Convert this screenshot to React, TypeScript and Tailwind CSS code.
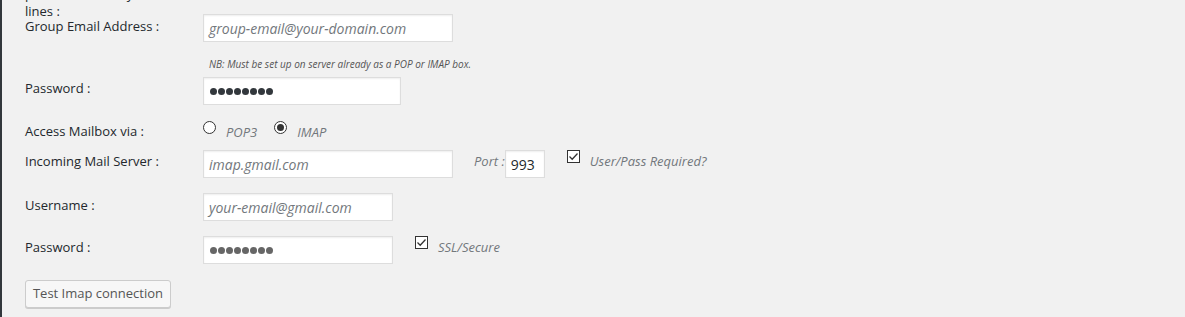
import type { ReactNode } from "react";

const font = { fontFamily: '"Open Sans", "Noto Sans", sans-serif' };

function Label({ children, pt = "pt-[3px]" }: { children: ReactNode; pt?: string }) {
  return <div className={`w-[178px] shrink-0 text-[13px] leading-[18px] text-[#23282d] ${pt}`}>{children}</div>;
}

function TextBox({ value, width, italic = true, dark = false }: { value: string; width: string; italic?: boolean; dark?: boolean }) {
  return (
    <div
      className={`flex h-[28px] items-center border border-[#ddd] bg-white px-[5px] shadow-[inset_0_1px_2px_rgba(0,0,0,0.07)] ${width} ${
        italic ? "italic" : ""
      } ${dark ? "text-[#23282d]" : "text-[#72777c]"} text-[14px]`}
    >
      {value}
    </div>
  );
}

function Dots({ width, color }: { width: string; color: string }) {
  return (
    <div className={`flex h-[28px] items-center gap-[1px] border border-[#ddd] bg-white px-[6px] shadow-[inset_0_1px_2px_rgba(0,0,0,0.07)] ${width}`}>
      {Array.from({ length: 8 }).map((_, i) => (
        <span key={i} className={`size-[7px] rounded-full ${color}`} />
      ))}
    </div>
  );
}

function Radio({ checked }: { checked?: boolean }) {
  return (
    <span className="flex size-[13px] items-center justify-center rounded-full border border-[#333] bg-white">
      {checked && <span className="size-[7px] rounded-full bg-[#333]" />}
    </span>
  );
}

function Check() {
  return (
    <span className="flex size-[13px] items-center justify-center border border-[#333] bg-white">
      <svg width="11" height="11" viewBox="0 0 11 11" fill="none">
        <path d="M1.5 5.5 L4.2 8.2 L9.5 2.5" stroke="#333" strokeWidth="1.3" />
      </svg>
    </span>
  );
}

export default function App() {
  return (
    <div className="flex h-[317px] w-[1185px] flex-col items-start overflow-hidden border-l-2 border-[#32373c] bg-[#f1f1f1] pl-[23px]" style={font}>
      <div className="flex h-[14px] flex-col">
        <div className="-mt-[14px] text-[13px] leading-[17px] text-[#23282d]">
          <div>preview summary</div>
          <div>lines :</div>
        </div>
      </div>

      <div className="flex items-start">
        <Label>Group Email Address :</Label>
        <TextBox value="group-email@your-domain.com" width="w-[250px]" />
      </div>

      <div className="mt-[15px] pl-[184px] text-[10px] italic leading-[14px] text-[#555]">
        NB: Must be set up on server already as a POP or IMAP box.
      </div>

      <div className="mt-[6px] flex items-start">
        <Label pt="pt-[2px]">Password :</Label>
        <Dots width="w-[198px]" color="bg-[#32373c]" />
      </div>

      <div className="mt-[17px] flex items-start">
        <Label pt="pt-0">Access Mailbox via :</Label>
        <div className="flex items-start text-[13px] italic leading-[18px] text-[#72777c]">
          <span className="-mt-[1px]"><Radio /></span>
          <span className="ml-[10px] mt-[1px]">POP3</span>
          <span className="-mt-[1px] ml-[17px]"><Radio checked /></span>
          <span className="ml-[10px] mt-[1px]">IMAP</span>
        </div>
      </div>

      <div className="mt-[9px] flex items-start">
        <Label pt="pt-[2px]">Incoming Mail Server :</Label>
        <TextBox value="imap.gmail.com" width="w-[250px]" />
        <span className="ml-[21px] pt-[2px] text-[13px] italic leading-[18px] text-[#72777c]">Port :</span>
        <TextBox value="993" width="w-[40px]" italic={false} dark />
        <span className="ml-[22px]"><Check /></span>
        <span className="ml-[10px] pt-[2px] text-[13px] italic leading-[18px] text-[#72777c]">User/Pass Required?</span>
      </div>

      <div className="mt-[15px] flex items-start">
        <Label>Username :</Label>
        <TextBox value="your-email@gmail.com" width="w-[190px]" />
      </div>

      <div className="mt-[15px] flex items-start">
        <Label pt="pt-[2px]">Password :</Label>
        <Dots width="w-[190px]" color="bg-[#666]" />
        <span className="ml-[22px]"><Check /></span>
        <span className="ml-[10px] pt-[2px] text-[13px] italic leading-[18px] text-[#72777c]">SSL/Secure</span>
      </div>

      <button
        type="button"
        className="mt-[16px] h-[28px] w-[146px] rounded-[3px] border border-[#ccc] bg-[#f7f7f7] text-[13px] text-[#555] shadow-[0_1px_0_#ccc]"
      >
        Test Imap connection
      </button>
    </div>
  );
}
